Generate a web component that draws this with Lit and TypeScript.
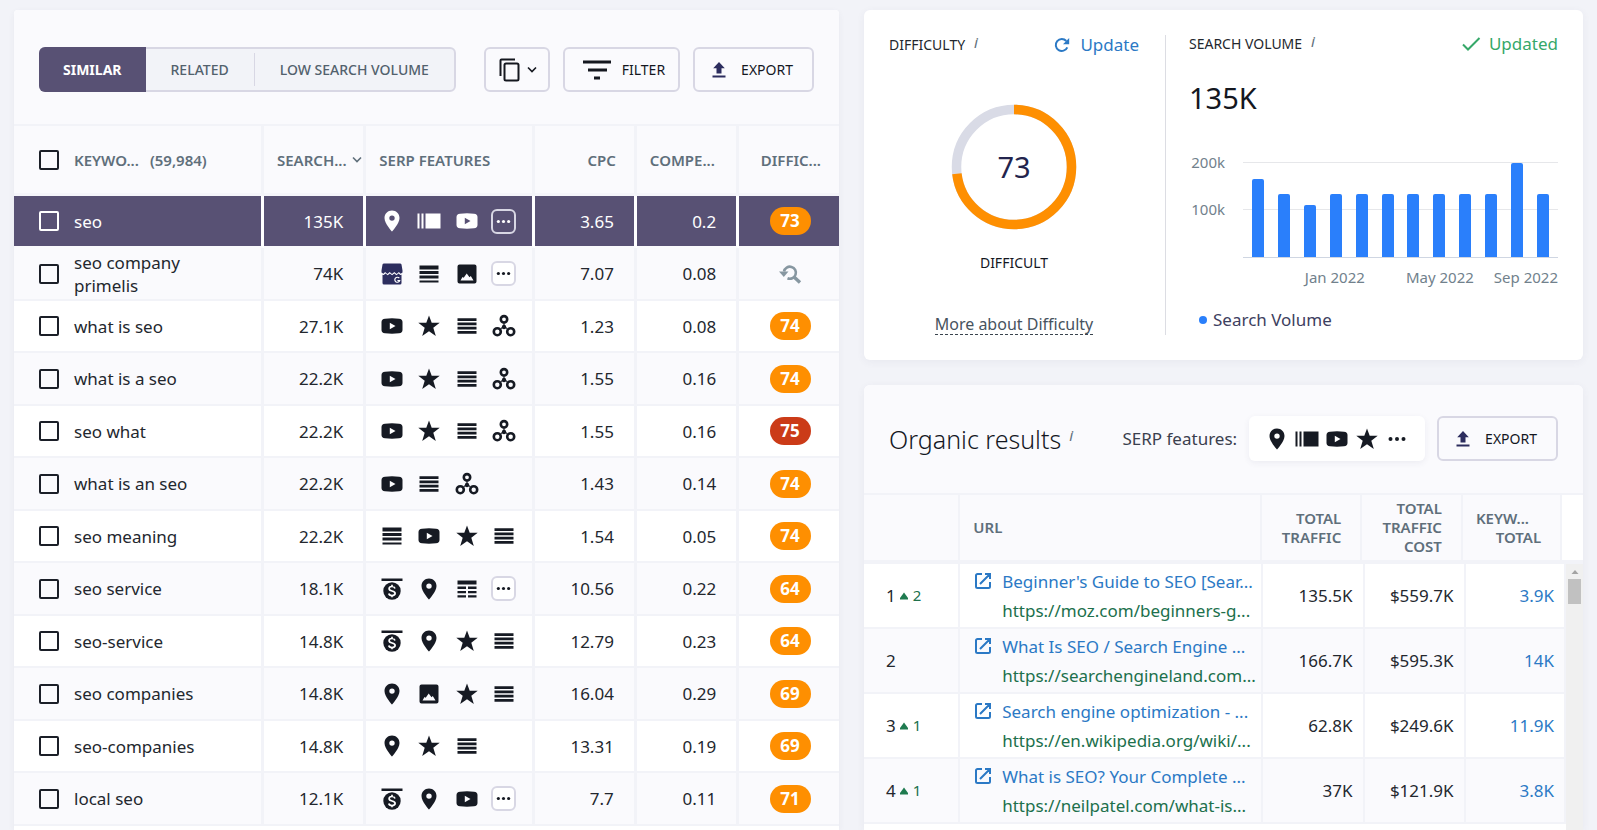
import { LitElement, html, svg, css, nothing } from "lit";
import { customElement, property } from "lit/decorators.js";
import { classMap } from "lit/directives/class-map.js";

type IconName =
  | "pin" | "carousel" | "video" | "store" | "snippet" | "image" | "star"
  | "links" | "related" | "ads" | "table" | "dots";

const LABELS: Record<IconName, string> = {
  pin: "Local pack", carousel: "Carousel", video: "Video", store: "Business profile",
  snippet: "Featured snippet", image: "Images", star: "Reviews", links: "Sitelinks",
  related: "People also ask", ads: "Ads top", table: "Table", dots: "More",
};

const SHAPES: Record<IconName, unknown> = {
  pin: svg`<path fill-rule="evenodd" d="M12 1.500c-4.300 0-7.500 3.300-7.500 7.500 0 5.600 7.500 13.500 7.500 13.500S19.500 14.600 19.500 9c0-4.200-3.200-7.500-7.500-7.500zm0 4.900a2.700 2.700 0 1 1 0 5.400 2.700 2.700 0 0 1 0-5.400z"/>`,
  carousel: svg`<path d="M.5 4.500h2v15h-2zM4.500 4.500h2v15h-2zM8.500 4.500h15v15h-15z"/>`,
  video: svg`<path fill-rule="evenodd" d="M5 4.700Q12 4 19 4.700 22.500 5 22.500 8v8q0 3-3.500 3.300-7 .7-14 0Q1.500 19 1.500 16V8q0-3 3.500-3.300zM9.800 8.800v6.400l5.700-3.200z"/>`,
  store: svg`<path d="M4 1.500h16q1.200 0 1.500 1l1 6v2l-1.900 1.300-1.700-1.800-2.300 2-2.300-2-2.300 2-2.300-2-2.300 2-2.300-2-1.700 1.800L1.500 10.500v-2l1-6q.3-1 1.500-1z"/><path d="M2.500 12.800l1.300.3 1.700-1.500 2.200 1.600 2.200-1.600 2.200 1.600 2.200-1.600 2.200 1.600 2-1.600 1.800 1.500 1.200-.3v8.200q0 1.500-1.500 1.500h-16q-1.500 0-1.500-1.500z"/><path d="M19.300 16.200a2.500 2.500 0 1 0 .4 2.300h-2.300" fill="none" stroke="#fff" stroke-width="1.200"/>`,
  snippet: svg`<path d="M2.500 3.500h19v4h-19zM2.500 9h19v3h-19zM2.500 13.600h19v3h-19zM2.500 18.500h19v2h-19z"/>`,
  image: svg`<path fill-rule="evenodd" d="M4.500 2.500h15a2 2 0 0 1 2 2v15a2 2 0 0 1-2 2h-15a2 2 0 0 1-2-2v-15a2 2 0 0 1 2-2zM5.500 18.500h13l-2.700-4.500-1.300 1.200-2.800-3.700-3 4.200-1.200-.8z"/>`,
  star: svg`<path d="M12 1.500l2.700 7.300h8l-6.400 4.900 2.500 8.300L12 17.200 5.200 22l2.500-8.300L1.300 8.800h8z"/>`,
  links: svg`<path d="M2.500 4.300h19v2.700h-19zM2.500 8.500h19v2.700h-19zM2.500 12.800h19v2.700h-19zM2.500 17h19v2.700h-19z"/>`,
  related: svg`<g fill="none" stroke="currentColor" stroke-width="2.600"><circle cx="12" cy="5.300" r="3.200"/><circle cx="5.300" cy="17.700" r="3.500"/><circle cx="18.700" cy="17.700" r="3.500"/></g><path d="M12 8v4.500M12 12.500l-3 2M12 12.500l3 2" stroke="currentColor" stroke-width="1.200"/><circle cx="12" cy="13" r="2.200"/>`,
  ads: svg`<path d="M1.500 1.500h21v2.500h-21z"/><circle cx="12" cy="14" r="8.700"/><path d="M15 11.400c-.4-1.300-1.500-1.900-3-1.900-1.700 0-2.900.8-2.900 2.200 0 3.100 6 1.500 6 4.600 0 1.400-1.300 2.300-3.100 2.300-1.700 0-2.900-.7-3.200-2.100M12 7.700v1.800M12 18.500v1.800" fill="none" stroke="#fff" stroke-width="1.700"/>`,
  table: svg`<path d="M2.500 3.500h19v4h-19zM2.500 9.500h8.500V12H2.500zM13 9.500h8.500V12H13zM2.500 14h8.500v2.300H2.500zM13 14h8.500v2.300H13zM2.500 18.200h8.500v2.300H2.500zM13 18.200h8.500v2.300H13z"/>`,
  dots: svg`<circle cx="5.500" cy="12" r="2"/><circle cx="12" cy="12" r="2"/><circle cx="18.500" cy="12" r="2"/>`,
};

const icon = (name: IconName) => html`<svg
  class=${classMap({ ico: true, store: name === "store" })}
  viewBox="0 0 24 24" width="24" height="24" fill="currentColor"
  role="img" aria-label=${LABELS[name]}>${SHAPES[name]}</svg>`;

const chevron = html`<svg class="chevron" viewBox="0 0 12 12" width="12" height="12" aria-hidden="true"><path d="M2 3.500l4 4 4-4" fill="none" stroke="currentColor" stroke-width="1.600"/></svg>`;

const upload = html`<svg viewBox="0 0 16 18" width="16" height="18" fill="#2c2d5e" aria-hidden="true"><path d="M8 1l5.800 6.300h-3.300v5.200h-5V7.300H2.200zM1.500 14.500h13v2h-13z"/></svg>`;

const shared = css`
  :host { display: block; }
  * { box-sizing: border-box; }
  svg { display: block; flex: none; }
  table { width: 100%; border-collapse: separate; border-spacing: 0; table-layout: fixed; }
  button { font: inherit; color: inherit; cursor: pointer; margin: 0; }
  .btn {
    display: flex; align-items: center; height: 45px; border: 2px solid #d8d7e4;
    border-radius: 6px; background: #fafafd; color: #14171f; font-size: 14px;
    line-height: 20px; padding: 0 17px; white-space: nowrap;
  }
  .store { color: #2c2d5e; }
`;

interface Keyword {
  name: string; volume: string; icons: IconName[]; cpc: string; comp: string; diff?: number;
}

const KEYWORDS: Keyword[] = [
  { name: "seo", volume: "135K", icons: ["pin", "carousel", "video", "dots"], cpc: "3.65", comp: "0.2", diff: 73 },
  { name: "seo company primelis", volume: "74K", icons: ["store", "snippet", "image", "dots"], cpc: "7.07", comp: "0.08" },
  { name: "what is seo", volume: "27.1K", icons: ["video", "star", "links", "related"], cpc: "1.23", comp: "0.08", diff: 74 },
  { name: "what is a seo", volume: "22.2K", icons: ["video", "star", "links", "related"], cpc: "1.55", comp: "0.16", diff: 74 },
  { name: "seo what", volume: "22.2K", icons: ["video", "star", "links", "related"], cpc: "1.55", comp: "0.16", diff: 75 },
  { name: "what is an seo", volume: "22.2K", icons: ["video", "links", "related"], cpc: "1.43", comp: "0.14", diff: 74 },
  { name: "seo meaning", volume: "22.2K", icons: ["snippet", "video", "star", "links"], cpc: "1.54", comp: "0.05", diff: 74 },
  { name: "seo service", volume: "18.1K", icons: ["ads", "pin", "table", "dots"], cpc: "10.56", comp: "0.22", diff: 64 },
  { name: "seo-service", volume: "14.8K", icons: ["ads", "pin", "star", "links"], cpc: "12.79", comp: "0.23", diff: 64 },
  { name: "seo companies", volume: "14.8K", icons: ["pin", "image", "star", "links"], cpc: "16.04", comp: "0.29", diff: 69 },
  { name: "seo-companies", volume: "14.8K", icons: ["pin", "star", "links"], cpc: "13.31", comp: "0.19", diff: 69 },
  { name: "local seo", volume: "12.1K", icons: ["ads", "pin", "video", "dots"], cpc: "7.7", comp: "0.11", diff: 71 },
];

@customElement("keyword-panel")
export class KeywordPanel extends LitElement {
  @property({ attribute: false }) rows: Keyword[] = KEYWORDS;

  static styles = [shared, css`
    .card { background: #fff; border-radius: 4px 4px 0 0; box-shadow: 0 2px 6px rgba(60, 60, 100, 0.06); min-height: 100%; }
    .toolbar { display: flex; align-items: center; padding: 37px 25px 32px; background: #fafafd; border-radius: 4px 4px 0 0; gap: 13px; }
    .tabs { display: flex; height: 45px; border: 2px solid #d8d7e4; border-radius: 6px; background: #f2f3f8; margin-right: auto; }
    .tab { border: 0; background: none; font-size: 14px; font-weight: 500; line-height: 20px; color: #52616d; padding: 0 25px; white-space: nowrap; }
    .tab.on { background: #585174; color: #fff; font-weight: 700; margin: -2px 0 -2px -2px; padding: 0 24px; border-radius: 6px 0 0 6px; }
    .tab + .tab + .tab { border-left: 1px solid #d8d7e4; margin: 4px 0; }
    .copy { padding: 0 10px 0 12px; gap: 4px; }
    .filter { gap: 10px; padding: 0 13px 0 17px; }
    .export { gap: 14px; padding: 0 19px 0 16px; }
    .c1 { width: 30.300%; }
    .c2, .c4, .c5 { width: 12.400%; }
    .c3 { width: 20.400%; }
    th {
      height: 72px; border-top: 2px solid #f2f3f8; border-right: 3px solid #f2f3f8; border-bottom: 3px solid #f5f5fa;
      background: #fafafd; color: #5f6f7b; font-size: 15px; line-height: 20px; font-weight: 600; text-align: left;
      padding: 0 13px; white-space: nowrap;
    }
    td {
      height: 52px; border-right: 3px solid #f2f3f8; border-bottom: 2px solid #f2f3f8;
      padding: 0 20px; color: #23272e; font-size: 17px; line-height: 23px;
    }
    th:last-child, td:last-child { border-right: 0; }
    tr:nth-child(even) td { height: 53px; background: #fafafd; }
    .num { text-align: right; }
    th.num { padding-right: 18px; }
    td.key, th.key { padding-left: 25px; }
    .pick { display: flex; align-items: center; gap: 15px; }
    .name { max-width: 140px; }
    .count { margin-left: -4px; }
    input {
      appearance: none; flex: none; width: 20px; height: 20px; margin: 0; border: 2px solid #1b1f28;
      border-radius: 2px; background: transparent;
    }
    .sort { display: flex; align-items: center; justify-content: space-between; }
    th.sorted { padding-right: 0; }
    td.feat { padding: 0 9px 0 7px; color: #161a23; }
    .current td, .current td.feat { background: #585174; color: #fff; border-right-color: #fff; border-bottom-color: #fafafd; }
    .current input { border-color: #fff; }
    .icons { display: grid; grid-template-columns: repeat(4, 1fr); justify-items: center; align-items: center; }
    .more { border: 2px solid #d8d7e4; border-radius: 6px; background: #fff; width: 25px; height: 25px; padding: 0; display: grid; place-items: center; }
    .current .more { background: transparent; color: #fff; }
    .more svg { width: 19px; height: 19px; }
    td.diff { padding: 0 0 0 2px; }
    .badge {
      display: block; width: 41px; height: 28px; margin: 0 auto; border-radius: 14px; background: #fe8f01; color: #fff;
      font-weight: 700; font-size: 17px; line-height: 28px; text-align: center;
    }
    .badge.hard { background: #cb3b18; }
    .recheck { display: block; border: 0; background: none; padding: 0; margin: 0 auto; color: #8797a1; }
  `];

  private feature(name: IconName) {
    return name === "dots"
      ? html`<button class="more" type="button">${icon("dots")}</button>`
      : icon(name);
  }

  render() {
    return html`
      <section class="card">
        <div class="toolbar">
          <div class="tabs" role="tablist">
            <button class="tab on" role="tab" aria-selected="true">SIMILAR</button>
            <button class="tab" role="tab" aria-selected="false">RELATED</button>
            <button class="tab" role="tab" aria-selected="false">LOW SEARCH VOLUME</button>
          </div>
          <button class="btn copy" type="button" aria-label="Copy">
            <svg viewBox="0 0 24 26" width="24" height="26" fill="none" stroke="#14171f" stroke-width="2" aria-hidden="true">
              <path d="M2.500 19V3.500a1 1 0 0 1 1-1H17"/><rect x="6.500" y="6.500" width="14" height="17" rx="1.500"/>
            </svg>${chevron}
          </button>
          <button class="btn filter" type="button">
            <svg viewBox="0 0 30 22" width="30" height="22" fill="#14171f" aria-hidden="true"><path d="M1 1.500h28v3H1zM6 9.500h19v3H6zM12 17.500h6v3h-6z"/></svg>FILTER
          </button>
          <button class="btn export" type="button">${upload}EXPORT</button>
        </div>
        <table>
          <colgroup><col class="c1"><col class="c2"><col class="c3"><col class="c4"><col class="c5"><col></colgroup>
          <thead>
            <tr>
              <th class="key"><div class="pick"><input type="checkbox" aria-label="Select all keywords"><span>KEYWO...</span><span class="count">(59,984)</span></div></th>
              <th class="sorted"><div class="sort"><span>SEARCH...</span>${chevron}</div></th>
              <th>SERP FEATURES</th>
              <th class="num">CPC</th>
              <th>COMPE...</th>
              <th class="num">DIFFIC...</th>
            </tr>
          </thead>
          <tbody>
            ${this.rows.map((r, i) => html`
              <tr class=${classMap({ current: i === 0 })}>
                <td class="key"><label class="pick"><input type="checkbox"><span class="name">${r.name}</span></label></td>
                <td class="num">${r.volume}</td>
                <td class="feat"><div class="icons">${r.icons.map((n) => this.feature(n))}</div></td>
                <td class="num">${r.cpc}</td>
                <td class="num">${r.comp}</td>
                <td class="diff">${r.diff
                  ? html`<span class=${classMap({ badge: true, hard: r.diff >= 75 })}>${r.diff}</span>`
                  : html`<button class="recheck" type="button" aria-label="Check difficulty">
                      <svg viewBox="0 0 24 24" width="24" height="24" fill="none" stroke="currentColor" stroke-width="2.600" aria-hidden="true">
                        <path d="M6 9.500a6 6 0 1 1 3.500 6.700"/><path d="M15.500 14.500l6.500 6" stroke-width="3.400"/><path d="M1 9.500h9.500l-4.700 5.500z" fill="currentColor" stroke="none"/>
                      </svg></button>`}</td>
              </tr>`)}
          </tbody>
        </table>
      </section>`;
  }
}

const VOLUMES = [165, 133, 110, 133, 133, 133, 133, 133, 133, 133, 200, 133];

@customElement("metrics-panel")
export class MetricsPanel extends LitElement {
  @property({ type: Number }) score = 73;

  static styles = [shared, css`
    .card { display: flex; background: #fff; border-radius: 6px; padding: 25px; box-shadow: 0 2px 8px rgba(60, 60, 100, 0.06); }
    .left { flex: 0 0 277px; border-right: 1px solid #dcdde3; display: flex; flex-direction: column; align-items: center; padding-right: 26px; }
    .right { flex: 1; min-width: 0; padding-left: 23px; }
    .head { display: flex; align-items: center; width: 100%; height: 20px; }
    .right .head { height: 18px; }
    .title { margin: 0; font-size: 14px; line-height: 20px; font-weight: 400; color: #23272e; }
    .info { font-size: 15px; line-height: 14px; font-style: italic; color: #5f6f7b; margin: 0 auto 6px 9px; }
    .update, .updated { display: flex; align-items: center; font-size: 17px; line-height: 20px; padding: 0; border: 0; background: none; }
    .update { color: #2b79c5; gap: 10px; }
    .updated { color: #36a869; gap: 8px; }
    .gauge { display: grid; place-items: center; margin-top: 49px; }
    .gauge > * { grid-area: 1 / 1; }
    .score { font-size: 29px; line-height: 36px; color: #23244d; }
    .level { font-size: 14px; line-height: 20px; color: #14171f; margin-top: 23px; }
    .more { font-size: 16px; line-height: 20px; color: #47535e; text-decoration: none; border-bottom: 1px dashed #3a444e; margin-top: 41px; }
    .total { font-size: 29px; line-height: 36px; color: #14171f; margin: 27px 0 42px; }
    .chart { display: grid; grid-template-columns: 36px 1fr; column-gap: 18px; }
    .axis { display: flex; flex-direction: column; font-size: 15px; line-height: 20px; color: #71818c; text-align: right; margin-top: -6px; gap: 27px; }
    .plot {
      display: flex; justify-content: space-between; align-items: flex-end; height: 96px; padding: 0 9px; margin-top: 4px;
      border-bottom: 1px solid #cfd6e2;
      background: linear-gradient(#e6e7ea, #e6e7ea) 0 0 / 100% 1px no-repeat, linear-gradient(#e6e7ea, #e6e7ea) 0 47px / 100% 1px no-repeat;
    }
    .bar { width: 12px; background: #2a7ffb; border-radius: 2px 2px 0 0; }
    .months { grid-column: 2; display: grid; grid-template-columns: repeat(12, 1fr); justify-items: center; font-size: 15px; line-height: 20px; color: #71818c; white-space: nowrap; margin-top: 9px; }
    .months span { grid-row: 1; }
    .jan { grid-column: 3 / 6; } .may { grid-column: 7 / 10; } .sep { grid-column: 10 / 13; justify-self: end; }
    .legend { display: flex; align-items: center; gap: 6px; font-size: 17px; line-height: 28px; color: #3d4060; margin: 19px 0 0 10px; }
    .dot { width: 8px; height: 8px; border-radius: 50%; background: #2a7ffb; }
  `];

  render() {
    const r = 57.5;
    const length = 2 * Math.PI * r;
    return html`
      <section class="card">
        <div class="left">
          <div class="head">
            <h2 class="title">DIFFICULTY</h2><span class="info">i</span>
            <button class="update" type="button">
              <svg viewBox="0 0 16 16" width="16" height="16" aria-hidden="true"><path d="M13.300 10.300A6 6 0 1 1 12.300 4" fill="none" stroke="currentColor" stroke-width="2"/><path d="M15.200 1v6.200H9z" fill="currentColor"/></svg>Update
            </button>
          </div>
          <div class="gauge">
            <svg viewBox="0 0 126 126" width="126" height="126" fill="none" stroke-width="9.500" aria-hidden="true">
              <circle cx="63" cy="63" r=${r} stroke="#d9dbe6"/>
              <circle cx="63" cy="63" r=${r} stroke="#fe8f01" stroke-dasharray="${(length * this.score) / 100} ${length}" transform="rotate(-90 63 63)"/>
            </svg>
            <span class="score">${this.score}</span>
          </div>
          <div class="level">DIFFICULT</div>
          <a class="more" href="#difficulty">More about Difficulty</a>
        </div>
        <div class="right">
          <div class="head">
            <h2 class="title">SEARCH VOLUME</h2><span class="info">i</span>
            <span class="updated">
              <svg viewBox="0 0 20 16" width="20" height="16" fill="none" stroke="currentColor" stroke-width="2" aria-hidden="true"><path d="M2 8.500l5 5L18.500 2"/></svg>Updated
            </span>
          </div>
          <div class="total">135K</div>
          <div class="chart">
            <div class="axis"><span>200k</span><span>100k</span></div>
            <div class="plot">${VOLUMES.map((v) => html`<div class="bar" style="height:${v / 2.02}%"></div>`)}</div>
            <div class="months"><span class="jan">Jan 2022</span><span class="may">May 2022</span><span class="sep">Sep 2022</span></div>
          </div>
          <div class="legend"><span class="dot"></span>Search Volume</div>
        </div>
      </section>`;
  }
}

interface Result {
  pos: number; up?: number; title: string; url: string; traffic: string; cost: string; keywords: string;
}

const RESULTS: Result[] = [
  { pos: 1, up: 2, title: "Beginner's Guide to SEO [Sear...", url: "https://moz.com/beginners-g...", traffic: "135.5K", cost: "$559.7K", keywords: "3.9K" },
  { pos: 2, title: "What Is SEO / Search Engine ...", url: "https://searchengineland.com...", traffic: "166.7K", cost: "$595.3K", keywords: "14K" },
  { pos: 3, up: 1, title: "Search engine optimization - ...", url: "https://en.wikipedia.org/wiki/...", traffic: "62.8K", cost: "$249.6K", keywords: "11.9K" },
  { pos: 4, up: 1, title: "What is SEO? Your Complete ...", url: "https://neilpatel.com/what-is...", traffic: "37K", cost: "$121.9K", keywords: "3.8K" },
];

@customElement("organic-results")
export class OrganicResults extends LitElement {
  @property({ attribute: false }) rows: Result[] = RESULTS;

  static styles = [shared, css`
    :host { display: flex; flex-direction: column; min-height: 0; }
    .card { flex: 1; display: flex; flex-direction: column; background: #fff; border-radius: 6px 6px 0 0; box-shadow: 0 2px 8px rgba(60, 60, 100, 0.06); }
    .head { display: flex; align-items: center; padding: 31px 25px 32px; background: #fafafd; border-radius: 6px 6px 0 0; }
    .title { margin: 0; font-size: 25px; line-height: 36px; font-weight: 300; color: #14171f; white-space: nowrap; }
    .info { font-size: 15px; line-height: 14px; font-style: italic; color: #5f6f7b; margin: 0 auto 8px 8px; }
    .caption { font-size: 17px; line-height: 24px; color: #3a404e; margin-right: 12px; white-space: nowrap; }
    .icons { display: flex; align-items: center; gap: 6px; height: 45px; padding: 0 16px; margin-right: 12px; border-radius: 6px; background: #fff; box-shadow: 0 2px 6px rgba(60, 60, 100, 0.07); color: #161a23; }
    .export { gap: 14px; padding: 0 19px 0 16px; }
    .h1 { width: 13.400%; } .h2 { width: 41.900%; } .h3, .h4 { width: 14%; } .h5 { width: 13.800%; }
    .b1 { width: 13.700%; } .b2 { width: 43.200%; } .b3, .b4 { width: 14.400%; }
    th {
      height: 71px; border-top: 2px solid #f2f3f8; border-bottom: 4px solid #f2f3f8; border-right: 2px solid #f2f3f8; background: #fafafd;
      color: #5f6f7b; font-size: 15px; line-height: 19px; font-weight: 600; padding: 0 19px 0 13px; text-align: left;
    }
    th.num { text-align: right; }
    .cut { display: block; text-align: left; }
    th.gutter { background: #fff; border-right: 0; padding: 0; }
    .body { flex: 1; display: grid; grid-template-columns: 1fr 17px; align-items: start; }
    td { height: 65px; border-right: 2px solid #f2f3f8; border-bottom: 2px solid #f2f3f8; padding: 0 10px 0 13px; font-size: 17px; line-height: 29px; color: #23272e; }
    tr:nth-child(even) td { background: #fafafd; }
    td.num { text-align: right; }
    td.pos { padding-left: 22px; }
    .rank { display: flex; align-items: center; gap: 3px; }
    .up { display: flex; align-items: center; gap: 4px; font-size: 15px; color: #20704c; }
    .site { display: grid; grid-template-columns: 20px 1fr; column-gap: 9px; align-items: center; white-space: nowrap; }
    .site a { text-decoration: none; color: #2b79c5; }
    .site a.url { grid-column: 2; color: #20704c; }
    td .count { color: #2b79c5; text-decoration: none; }
    .scroll { align-self: stretch; background: #f0f0f0; padding: 5px 2px; }
    .thumb { height: 25px; margin-top: 4px; background: #c1c1c1; }
    .scroll svg { margin: 0 auto; }
  `];

  render() {
    const strip: IconName[] = ["pin", "carousel", "video", "star", "dots"];
    return html`
      <section class="card">
        <div class="head">
          <h2 class="title">Organic results</h2><span class="info">i</span>
          <span class="caption">SERP features:</span>
          <div class="icons">${strip.map((n) => icon(n))}</div>
          <button class="btn export" type="button">${upload}EXPORT</button>
        </div>
        <table>
          <colgroup><col class="h1"><col class="h2"><col class="h3"><col class="h4"><col class="h5"><col></colgroup>
          <thead><tr>
            <th></th><th>URL</th>
            <th class="num">TOTAL TRAFFIC</th><th class="num">TOTAL TRAFFIC COST</th>
            <th class="num"><span class="cut">KEYW...</span>TOTAL</th><th class="gutter"></th>
          </tr></thead>
        </table>
        <div class="body">
          <table>
            <colgroup><col class="b1"><col class="b2"><col class="b3"><col class="b4"><col></colgroup>
            <tbody>
              ${this.rows.map((r) => html`<tr>
                <td class="pos"><div class="rank">${r.pos}${r.up
                  ? html`<span class="up"><svg viewBox="0 0 10 8" width="10" height="8" fill="#1e7a4f" aria-hidden="true"><path d="M5 .5l4 5.500v1.500H1V6z"/></svg>${r.up}</span>`
                  : nothing}</div></td>
                <td><div class="site">
                  <svg viewBox="0 0 20 20" width="20" height="20" fill="none" stroke="#2b79c5" stroke-width="2" aria-hidden="true"><path d="M9 3H4.500A1.500 1.500 0 0 0 3 4.500v11A1.500 1.500 0 0 0 4.500 17h11a1.500 1.500 0 0 0 1.500-1.500V11M12 3h5v5M17 3L7 13"/></svg>
                  <a href="#result">${r.title}</a><a class="url" href="#result">${r.url}</a></div></td>
                <td class="num">${r.traffic}</td>
                <td class="num">${r.cost}</td>
                <td class="num"><a class="count" href="#keywords">${r.keywords}</a></td>
              </tr>`)}
            </tbody>
          </table>
          <div class="scroll" aria-hidden="true">
            <svg viewBox="0 0 8 6" width="8" height="6" fill="#a3a3a3"><path d="M4 1l3.500 4h-7z"/></svg>
            <div class="thumb"></div>
          </div>
        </div>
      </section>`;
  }
}

@customElement("app-root")
export class AppRoot extends LitElement {
  static styles = css`
    :host {
      display: grid; grid-template-columns: 825fr 719fr; column-gap: 25px; box-sizing: border-box; height: 100vh;
      padding: 10px 14px 0; background: #f2f3f8; overflow: hidden; font-family: "Noto Sans", "Open Sans", sans-serif;
    }
    .side { display: flex; flex-direction: column; gap: 25px; min-width: 0; min-height: 0; }
    organic-results { flex: 1; }
  `;

  render() {
    return html`
      <keyword-panel></keyword-panel>
      <div class="side"><metrics-panel></metrics-panel><organic-results></organic-results></div>`;
  }
}
